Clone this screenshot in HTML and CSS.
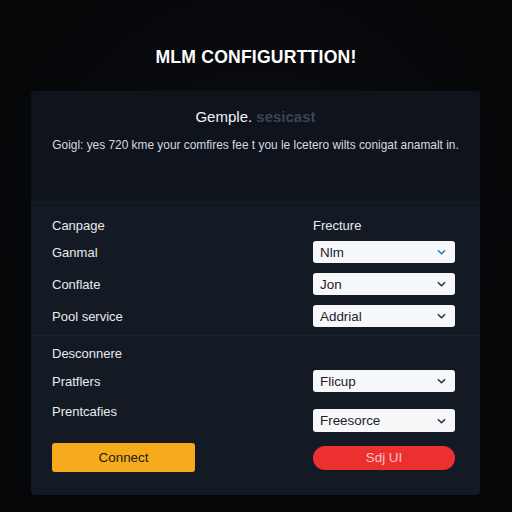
FILE: index.html
```html
<!DOCTYPE html>
<html lang="en">
<head>
    <meta charset="UTF-8">
    <meta name="viewport" content="width=device-width, initial-scale=1.0">
    <title>MLM Configurttion</title>
    <link rel="stylesheet" href="styles.css">
</head>
<body>
    <h1 class="page-title">MLM CONFIGURTTION!</h1>

    <div class="card">
        <div class="card-head">
            <h2 class="card-title">Gemple. <span class="muted">sesicast</span></h2>
            <p class="card-desc">Goigl: yes 720 kme your comfires fee t you le lcetero wilts conigat anamalt in.</p>
        </div>

        <div class="card-body">
            <div class="row r-label">
                <label>Canpage</label>
                <label class="col-right">Frecture</label>
            </div>
            <div class="row r-field gap7">
                <label>Ganmal</label>
                <div class="select">Nlm <svg class="chev active" viewBox="0 0 10 6"><path d="M1 1l4 4 4-4"/></svg></div>
            </div>
            <div class="row r-field">
                <label>Conflate</label>
                <div class="select">Jon <svg class="chev" viewBox="0 0 10 6"><path d="M1 1l4 4 4-4"/></svg></div>
            </div>
            <div class="row r-field">
                <label>Pool service</label>
                <div class="select">Addrial <svg class="chev" viewBox="0 0 10 6"><path d="M1 1l4 4 4-4"/></svg></div>
            </div>

            <div class="divider"></div>

            <div class="row r-label gap8">
                <label>Desconnere</label>
            </div>
            <div class="row r-field gap8">
                <label>Pratflers</label>
                <div class="select">Flicup <svg class="chev" viewBox="0 0 10 6"><path d="M1 1l4 4 4-4"/></svg></div>
            </div>
            <div class="row r-split">
                <label>Prentcafies</label>
                <div class="select">Freesorce <svg class="chev" viewBox="0 0 10 6"><path d="M1 1l4 4 4-4"/></svg></div>
            </div>

            <div class="row r-actions">
                <button class="btn btn-connect">Connect</button>
                <button class="btn btn-red">Sdj UI</button>
            </div>
        </div>
    </div>
</body>
</html>
```

FILE: styles.css
```css
body { margin: 0; height: 512px; overflow: hidden; font-family: "Liberation Sans", Arial, sans-serif; background: radial-gradient(circle at 50% 40%, #0b0e13 0%, #050608 70%); color: #e6e8eb; }
.page-title { margin: 0; padding-top: 47px; height: 44px; text-align: center; font-size: 17.6px; font-weight: bold; color: #fff; letter-spacing: 0.2px; }
.card { margin-left: 31px; width: 449px; background: #141a24; border-radius: 4px; overflow: hidden; }
.card-head { height: 111px; box-sizing: border-box; padding-top: 17px; background: #0e131c; border-bottom: 1px solid #171d27; text-align: center; }
.card-title { margin: 0; font-size: 15px; font-weight: normal; color: #f2f4f6; }
.card-title .muted { color: #3a4658; font-weight: bold; }
.card-desc { margin: 13px 0 0; font-size: 11.9px; color: #d6dae0; }
.card-body { padding: 0 25px 23px 21px; }
.row { display: flex; align-items: center; margin-top: 10px; }
.row label { flex: 1; font-size: 13px; color: #e8eaed; }
.r-label { height: 18px; margin-top: 14px; }
.r-field { height: 22px; }
.gap7 { margin-top: 7px; }
.gap8 { margin-top: 8px; }
.col-right { flex: 0 0 142px !important; }
.divider { height: 1px; margin-top: 8px; background: #1b212b; margin-left: -21px; margin-right: -25px; }
.select { flex: 0 0 142px; height: 22px; box-sizing: border-box; display: flex; align-items: center; justify-content: space-between; padding: 0 9px 0 7px; background: #f7f8fa; border-radius: 3px; font-size: 13.4px; color: #1d2229; }
.chev { width: 9px; height: 6px; fill: none; stroke: #2b2f36; stroke-width: 1.6; }
.chev.active { stroke: #2d78b8; }
.r-split { height: 27px; margin-top: 13px; align-items: stretch; }
.r-split label { align-self: flex-start; margin-top: -1px; }
.r-split .select { align-self: flex-end; height: 23px; }
.r-actions { height: 29px; margin-top: 11px; justify-content: space-between; }
.btn { border: none; font-family: inherit; font-size: 13.4px; cursor: pointer; }
.btn-connect { width: 143px; height: 29px; background: #f6ab1c; color: #1c1a16; border-radius: 3px; }
.btn-red { width: 142px; height: 24px; background: #ec2f2f; color: #f4c8c8; border-radius: 12px; }
```
